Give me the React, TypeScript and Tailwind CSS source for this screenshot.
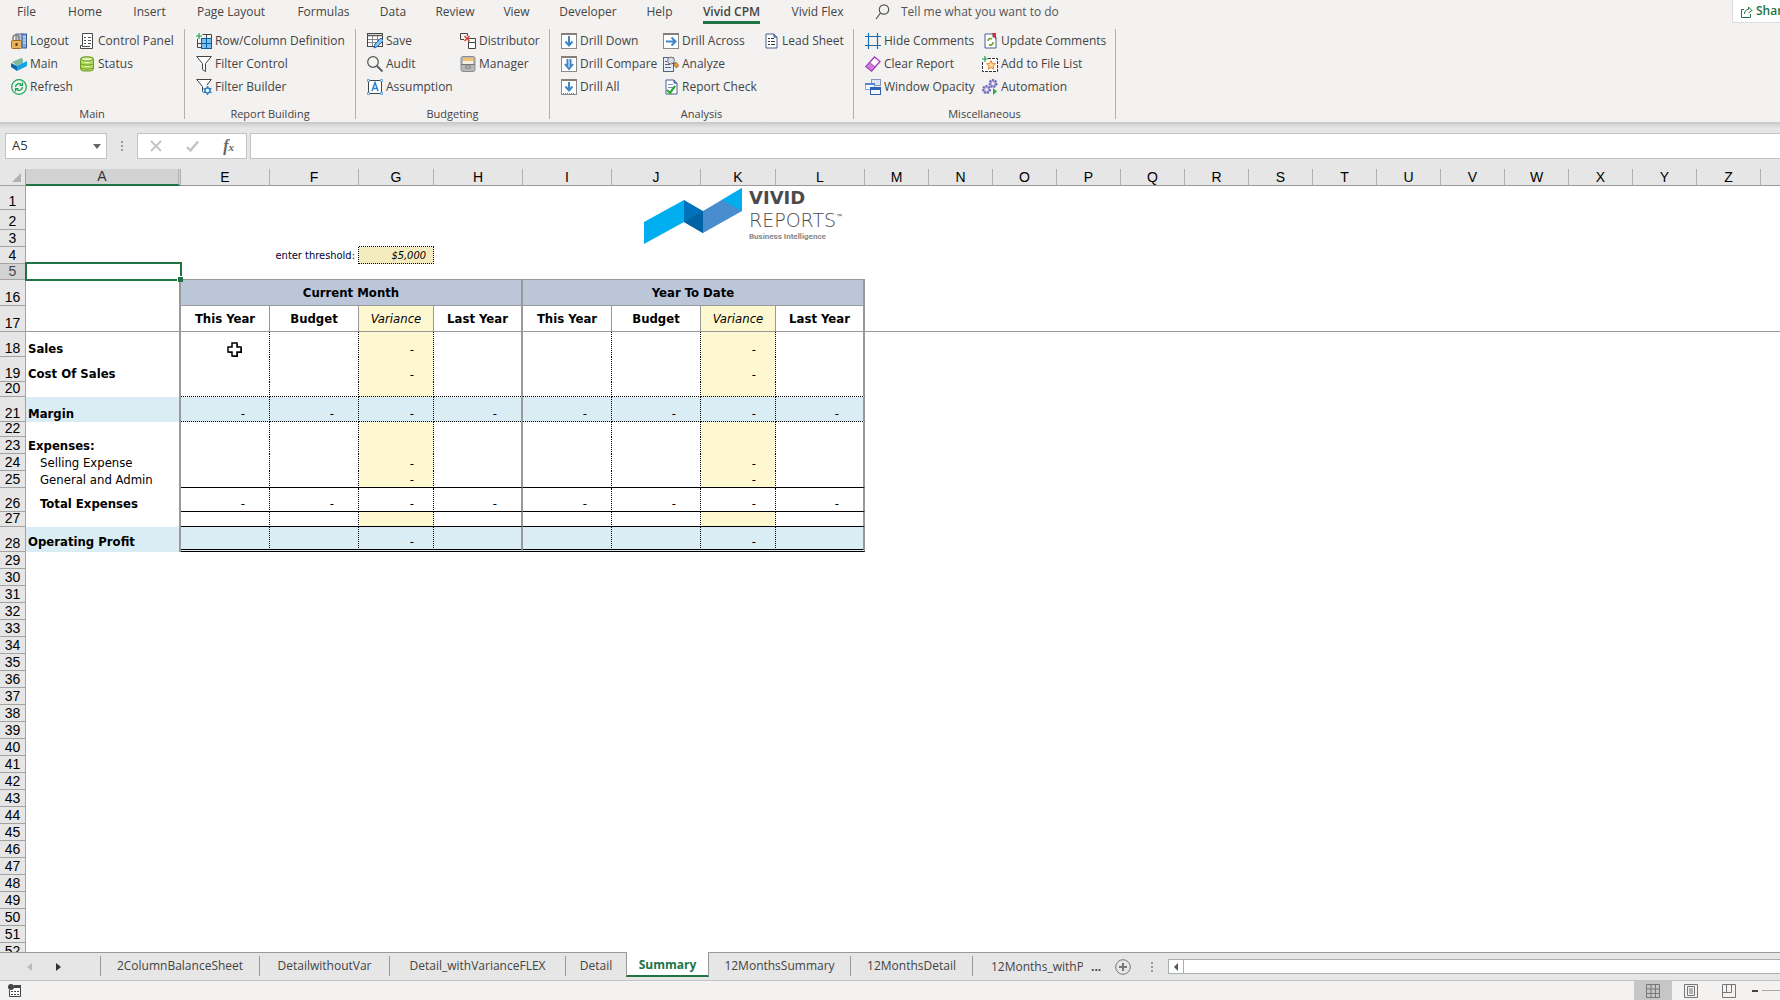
import React from "react";
import clsx from "clsx";

// 16x16 drawings used on the ribbon
const page = (
  <>
    <path d="M3 1h8l3 3v11H3z" fill="#fff" stroke="#4a5f8c" />
    <path d="M11 1v3h3" fill="#9db4dc" stroke="#2f477d" />
  </>
);

const drillFrame = (
  <>
    <rect x="0.5" y="0.5" width="15" height="15" fill="#fff" stroke="#8a8a8a" />
    <rect x="0" y="0" width="16" height="2" fill="#857f78" />
  </>
);

const icons: Record<string, React.ReactNode> = {
  logout: (
    <>
      <rect x="5" y="1" width="7" height="11" fill="#b9c4d6" stroke="#5e6f8f" />
      <rect x="11" y="1" width="4.500" height="14" fill="#86a4d6" stroke="#3d5c98" />
      <path d="M12 4h3M12 7h3M12 10h3" stroke="#e4ecf8" />
      <path d="M2 8V5a3 3 0 0 1 6 0v3" fill="none" stroke="#8c8272" strokeWidth="1.500" />
      <rect x="0.500" y="7.500" width="10" height="8" rx="1" fill="#e7b45c" stroke="#a4681f" />
      <path d="M5.500 10v3" stroke="#5f3b0c" strokeWidth="2" />
    </>
  ),
  main: (
    <>
      <path d="M1 6l9-4 2 1v4l-6 3z" fill="#7fb89a" />
      <path d="M0 7l6 3v5l-6-4z" fill="#0d68a8" />
      <path d="M6 10l10-5v5l-10 5z" fill="#14a3e8" />
    </>
  ),
  refresh: (
    <g fill="none" stroke="#16a34f">
      <circle cx="8" cy="8" r="7.300" strokeWidth="1.200" />
      <path d="M4.500 8a3.500 3.500 0 0 1 6-2.300M11.500 8a3.500 3.500 0 0 1-6 2.300" strokeWidth="1.400" />
      <path d="M11.500 3.500v3h-3M4.500 12.500v-3h3" strokeWidth="1.200" />
    </g>
  ),
  controlPanel: (
    <>
      <path d="M3.500 0.500h10v15h-12v-3h2z" fill="#fff" stroke="#4a4a4a" />
      <path d="M5 4.500h2M9 4.500h3M5 7.500h2M9 7.500h3M5 10.500h2M9 10.500h3M3 13.500h8" stroke="#555" />
    </>
  ),
  status: (
    <g stroke="#6d9c25">
      <rect x="1.500" y="1" width="13" height="14" rx="3" fill="#b5dc63" />
      <ellipse cx="8" cy="3" rx="6" ry="2" fill="#e2f3b8" />
      <path d="M2 8c3 1.500 9 1.500 12 0M2 12c3 1.500 9 1.500 12 0" fill="none" />
      <path d="M6 6.500h4M6 10.500h4" stroke="#f4ffd9" />
    </g>
  ),
  rowColumn: (
    <>
      <path d="M6.500 1.500h9v5M1.500 6v8.500h5M1.500 10.500h5M10.500 1v4" fill="none" stroke="#444" />
      <rect x="5.500" y="5.500" width="10" height="10" fill="#7cc0ee" stroke="#0b5fa5" />
      <path d="M10.500 5v11M5 10.500h11" stroke="#0b5fa5" />
      <path d="M3 0v6M0 3h6" stroke="#1da64b" strokeWidth="1.200" />
    </>
  ),
  filter: <path d="M0.700 0.500h14.600L9.500 7.500v8l-3-2v-6z" fill="#fff" stroke="#444" />,
  filterBuilder: (
    <>
      <path d="M7.500 13.500l-1-1v-5L0.700 0.500h14.600L11 6" fill="#fff" stroke="#444" />
      <circle cx="11.500" cy="11.500" r="2.500" fill="#fff" stroke="#2b83cf" strokeWidth="1.500" />
      <path d="M11.500 7v2M11.500 14v2M7.500 9.300l1.800 1M13.700 12.700l1.800 1M7.500 13.700l1.800-1M13.700 10.300l1.800-1" stroke="#2b83cf" strokeWidth="1.500" />
    </>
  ),
  save: (
    <>
      <rect x="0.500" y="0.500" width="15" height="13" fill="#fff" stroke="#444" />
      <path d="M0 2.500h16" stroke="#555" strokeWidth="1.500" />
      <path d="M1 6.500h14M1 9.500h14M5.500 3v10M10.500 3v10" stroke="#888" />
      <path d="M7 15l1-4 6-6 2.500 2.500-6 6z" fill="#8cc4f0" stroke="#1b62a8" />
    </>
  ),
  audit: (
    <g fill="none" stroke="#555">
      <circle cx="6" cy="6" r="5.300" strokeWidth="1.200" />
      <path d="M10 10l5.500 5.500" strokeWidth="1.800" />
    </g>
  ),
  assumption: (
    <>
      <rect x="1.500" y="1.500" width="13" height="13" fill="#fff" stroke="#444" />
      <path d="M5 12l3-8.500 3 8.500M6 9.500h4" fill="none" stroke="#2b83cf" strokeWidth="1.500" />
      <g fill="#fff" stroke="#2b83cf">
        <circle cx="1.500" cy="1.500" r="1.200" />
        <circle cx="14.500" cy="1.500" r="1.200" />
        <circle cx="1.500" cy="14.500" r="1.200" />
        <circle cx="14.500" cy="14.500" r="1.200" />
      </g>
    </>
  ),
  distributor: (
    <g fill="none" stroke="#444">
      <path d="M4 6.500H0.500v-6h7V3" />
      <path d="M8.500 9.500v-4h7v4zM8.500 15.500v-6h7v6z" fill="#fff" />
      <path d="M4.500 3l5 5M9.500 3l-5 5" stroke="#e2452f" strokeWidth="1.500" />
    </g>
  ),
  manager: (
    <>
      <rect x="1" y="0.500" width="14" height="15" rx="2" fill="#b7b7b9" stroke="#8d8d90" />
      <rect x="3" y="2" width="10" height="3" fill="#f2c169" />
      <rect x="3" y="5" width="10" height="3" fill="#f4f0e6" />
      <path d="M1 8.500h14" stroke="#77777a" />
      <rect x="6" y="10" width="4" height="2" fill="#eee" stroke="#777" />
    </>
  ),
  drillDown: (
    <>
      {drillFrame}
      <path d="M8 3v9M4.500 8.500L8 12.500l3.500-4" fill="none" stroke="#3f86c6" strokeWidth="2" />
    </>
  ),
  drillCompare: (
    <>
      {drillFrame}
      <path d="M6.500 3v8M9.500 3v8M4 8l4 5 4-5" fill="none" stroke="#3f86c6" strokeWidth="2" />
    </>
  ),
  drillAll: (
    <>
      {drillFrame}
      <path d="M8 3v8M4.500 7.500L8 11.500l3.500-4" fill="none" stroke="#3f86c6" strokeWidth="2" />
      <path d="M2 14.500h12" stroke="#3f86c6" strokeDasharray="1 1" />
    </>
  ),
  drillAcross: (
    <>
      {drillFrame}
      <path d="M3 8.500h9M8.500 4.500l4 4-4 4" fill="none" stroke="#3f86c6" strokeWidth="2" />
    </>
  ),
  analyze: (
    <>
      <rect x="0.500" y="1.500" width="10" height="14" fill="#e8eef7" stroke="#5a6377" />
      <path d="M2 5.500h2M2 8.500h5M2 11.500h6" stroke="#5a6377" />
      <circle cx="8" cy="4.500" r="3.500" fill="#d3dbe6" stroke="#777" />
      <path d="M10 7l4 4" stroke="#5d4b36" strokeWidth="2" />
      <path d="M13 6l3 3.500-2.500 2.500-3-3.500z" fill="#e39b3c" stroke="#5d4b36" strokeWidth="0.500" />
    </>
  ),
  reportCheck: (
    <>
      {page}
      <path d="M5 5.500h5M5 8.500h6" stroke="#7d93c0" />
      <path d="M4 11l3 3 5-7" fill="none" stroke="#33a63a" strokeWidth="2.200" />
    </>
  ),
  leadSheet: (
    <>
      {page}
      <path d="M5 5.500h2M8 5.500h3M5 8.500h2M8 8.500h4M5 11.500h2M8 11.500h4" stroke="#333" />
    </>
  ),
  hideComments: <path d="M3.500 0v16M12.500 0v16M0 3.500h16M0 12.500h16" stroke="#1d6cad" strokeWidth="1.200" />,
  clearReport: (
    <>
      <path d="M1 10.500L9.500 1l5.500 4.500L6.500 15z" fill="#fff" stroke="#a43bb8" strokeWidth="1.300" />
      <path d="M1 10.500l3.500-4 5.500 4.500-3.500 4z" fill="#cf7edb" stroke="#a43bb8" />
    </>
  ),
  windowOpacity: (
    <>
      <rect x="6.500" y="0.500" width="9" height="6" fill="#dde5f3" stroke="#8795b5" />
      <rect x="0.500" y="4.500" width="9" height="6" fill="#f7faff" stroke="#8fa9d6" />
      <rect x="0" y="4" width="10" height="2" fill="#5a86cf" />
      <rect x="5.500" y="9.500" width="10" height="6" fill="#f2f6fd" stroke="#2f5fa8" />
      <rect x="5" y="8" width="11" height="3" fill="#2f63b8" />
    </>
  ),
  updateComments: (
    <>
      {page}
      <path d="M10 0h4v7z" fill="#d93025" />
      <path d="M6 8a2.500 2.500 0 0 1 4-2M11 9a2.500 2.500 0 0 1-4 2.500" fill="none" stroke="#6f9c1f" strokeWidth="1.600" />
    </>
  ),
  addToList: (
    <>
      <path d="M6 2.500h9.500v13h-15V6" fill="#fff" stroke="#333" strokeDasharray="3 1" />
      <path d="M9 4.500l1.300 3 3.200.300-2.400 2.200.700 3.200L9 11.500l-2.800 1.700.700-3.200-2.400-2.200 3.200-.300z" fill="#fbd9a5" stroke="#e8862a" />
      <path d="M3 0v6M0 3h6" stroke="#1da64b" strokeWidth="1.200" />
    </>
  ),
  automation: (
    <>
      <circle cx="11" cy="4.500" r="3.500" fill="#a9a6dc" stroke="#6b68b5" strokeDasharray="2 1" strokeWidth="2" />
      <circle cx="4.500" cy="10.500" r="3.500" fill="#a9a6dc" stroke="#6b68b5" strokeDasharray="2 1" strokeWidth="2" />
      <circle cx="11" cy="4.500" r="1.200" fill="#fff" />
      <circle cx="4.500" cy="10.500" r="1.200" fill="#fff" />
      <path d="M11 9l4 3.500-4 3.500z" fill="#3aa544" />
    </>
  ),
};

const menuTabs = [
  { label: "File", width: "w-[49px]" },
  { label: "Home", width: "w-[68px]" },
  { label: "Insert", width: "w-[61px]" },
  { label: "Page Layout", width: "w-[102px]" },
  { label: "Formulas", width: "w-[83px]" },
  { label: "Data", width: "w-[56px]" },
  { label: "Review", width: "w-[68px]" },
  { label: "View", width: "w-[55px]" },
  { label: "Developer", width: "w-[88px]" },
  { label: "Help", width: "w-[55px]" },
  { label: "Vivid CPM", width: "w-[89px]", active: true },
  { label: "Vivid Flex", width: "w-[83px]" },
];

type Command = [icon: string, label: string];

const groups: { name: string; width: string; columns: { width: string; items: Command[] }[] }[] = [
  {
    name: "Main",
    width: "w-[185px]",
    columns: [
      { width: "w-[68px]", items: [["logout", "Logout"], ["main", "Main"], ["refresh", "Refresh"]] },
      { width: "w-[100px]", items: [["controlPanel", "Control Panel"], ["status", "Status"]] },
    ],
  },
  {
    name: "Report Building",
    width: "w-[171px]",
    columns: [
      {
        width: "w-[150px]",
        items: [["rowColumn", "Row/Column Definition"], ["filter", "Filter Control"], ["filterBuilder", "Filter Builder"]],
      },
    ],
  },
  {
    name: "Budgeting",
    width: "w-[194px]",
    columns: [
      { width: "w-[93px]", items: [["save", "Save"], ["audit", "Audit"], ["assumption", "Assumption"]] },
      { width: "w-[85px]", items: [["distributor", "Distributor"], ["manager", "Manager"]] },
    ],
  },
  {
    name: "Analysis",
    width: "w-[304px]",
    columns: [
      { width: "w-[102px]", items: [["drillDown", "Drill Down"], ["drillCompare", "Drill Compare"], ["drillAll", "Drill All"]] },
      { width: "w-[100px]", items: [["drillAcross", "Drill Across"], ["analyze", "Analyze"], ["reportCheck", "Report Check"]] },
      { width: "w-[85px]", items: [["leadSheet", "Lead Sheet"]] },
    ],
  },
  {
    name: "Miscellaneous",
    width: "w-[262px]",
    columns: [
      {
        width: "w-[117px]",
        items: [["hideComments", "Hide Comments"], ["clearReport", "Clear Report"], ["windowOpacity", "Window Opacity"]],
      },
      {
        width: "w-[130px]",
        items: [["updateComments", "Update Comments"], ["addToList", "Add to File List"], ["automation", "Automation"]],
      },
    ],
  },
];

const reportColumns = [
  { letter: "E", width: "w-[89px]" },
  { letter: "F", width: "w-[89px]" },
  { letter: "G", width: "w-[75px]" },
  { letter: "H", width: "w-[89px]" },
  { letter: "I", width: "w-[89px]" },
  { letter: "J", width: "w-[89px]" },
  { letter: "K", width: "w-[75px]" },
  { letter: "L", width: "w-[89px]" },
];
const emptyColumns = "MNOPQRSTUVWXYZ".split("");
const headings = ["This Year", "Budget", "Variance", "Last Year"];

interface ReportRow {
  n: number;
  height: string;
  label?: string;
  labelStyle?: string;
  shaded?: boolean;
  plain?: boolean; // no yellow variance column
  dashes?: "all" | "variance";
  bottom?: string;
}

const reportRows: ReportRow[] = [
  { n: 18, height: "h-[25px]", label: "Sales", labelStyle: "font-bold", dashes: "variance" },
  { n: 19, height: "h-[25px]", label: "Cost Of Sales", labelStyle: "font-bold", dashes: "variance" },
  { n: 20, height: "h-[15px]", bottom: "border-b border-b-black [border-bottom-style:dotted]" },
  { n: 21, height: "h-[25px]", label: "Margin", labelStyle: "font-bold", shaded: true, dashes: "all", bottom: "border-b border-b-black [border-bottom-style:dotted]" },
  { n: 22, height: "h-[15px]" },
  { n: 23, height: "h-[17px]", label: "Expenses:", labelStyle: "font-bold" },
  { n: 24, height: "h-[17px]", label: "Selling Expense", labelStyle: "pl-3", dashes: "variance" },
  { n: 25, height: "h-[17px]", label: "General and Admin", labelStyle: "pl-3", dashes: "variance", bottom: "border-b border-b-black" },
  { n: 26, height: "h-[24px]", label: "Total Expenses", labelStyle: "pl-3 font-bold", plain: true, dashes: "all", bottom: "border-b border-b-black" },
  { n: 27, height: "h-[15px]", bottom: "border-b border-b-black" },
  { n: 28, height: "h-[25px]", label: "Operating Profit", labelStyle: "font-bold pb-[2px]", shaded: true, dashes: "variance", bottom: "border-b-[3px] border-b-black [border-bottom-style:double]" },
];

const trailingRows = Array.from({ length: 24 }, (_, i) => 29 + i);

const sheetTabs = [
  { label: "2ColumnBalanceSheet", width: "w-[160px]" },
  { label: "DetailwithoutVar", width: "w-[130px]" },
  { label: "Detail_withVarianceFLEX", width: "w-[176px]" },
  { label: "Detail", width: "w-[60px]" },
  { label: "Summary", width: "w-[83px]", active: true },
  { label: "12MonthsSummary", width: "w-[142px]" },
  { label: "12MonthsDetail", width: "w-[122px]" },
];

const Icon = ({ name }: { name: string }) => (
  <svg width="16" height="16" viewBox="0 0 16 16" className="shrink-0" aria-hidden="true">
    {icons[name]}
  </svg>
);

const MenuBar = () => (
  <div className="flex h-[29px] items-start pl-[2px] text-[#444]">
    {menuTabs.map((tab) => (
      <button key={tab.label} className={clsx("flex h-[24px] shrink-0 justify-center", tab.width)}>
        <span
          className={clsx(
            "h-[24px] whitespace-nowrap leading-[23px]",
            tab.active && "border-b-[3px] border-[#217346] font-semibold"
          )}
        >
          {tab.label}
        </span>
      </button>
    ))}
    <label className="ml-4 flex h-[24px] flex-1 items-center gap-[11px]">
      <svg width="15" height="16" viewBox="0 0 15 16" fill="none" stroke="#555" strokeWidth="1.200">
        <circle cx="9" cy="5.500" r="4.700" />
        <path d="M5.500 9L1 15" />
      </svg>
      <input
        className="w-[240px] bg-transparent outline-none placeholder:text-[#555]"
        placeholder="Tell me what you want to do"
      />
    </label>
    <button className="flex h-[23px] w-12 items-center gap-[3px] overflow-hidden border-b border-l border-[#ddd] bg-white pl-[7px] font-semibold text-[#217346]">
      <svg width="13" height="13" viewBox="0 0 13 13" className="shrink-0" fill="none" stroke="#217346">
        <path d="M4 4.500H1.500v8h9V9M4.500 9c0-3 1.500-4.500 4-4.500V2L12 5.500 8.500 8" />
      </svg>
      Share
    </button>
  </div>
);

const Ribbon = () => (
  <div className="flex h-[93px] text-[12px] text-[#444]">
    {groups.map((group) => (
      <section key={group.name} className={clsx("shrink-0", group.width)}>
        <div className="flex h-[90px] flex-col justify-between border-r border-[#b1b1b1]">
          <div className="flex pl-[11px]">
            {group.columns.map((column, i) => (
              <div key={i} className={clsx("shrink-0", column.width)}>
                {column.items.map(([icon, label]) => (
                  <button key={label} className="flex h-[23px] items-center gap-[3px] whitespace-nowrap">
                    <Icon name={icon} />
                    {label}
                  </button>
                ))}
              </div>
            ))}
          </div>
          <div className="text-center text-[11px] leading-[11px]">{group.name}</div>
        </div>
      </section>
    ))}
  </div>
);

const FormulaBar = () => (
  <div className="bg-[#e6e6e6]">
    <div className="h-[6px] bg-linear-to-b from-[#c6c6c6] to-[#e6e6e6]" />
    <div className="flex pt-[5px] pb-[10px] pl-[5px]">
      <div className="flex h-[26px] w-[102px] items-center border border-[#c3c3c3] bg-white pr-[5px] pl-[6px]">
        <input aria-label="Name box" defaultValue="A5" className="w-full min-w-0 text-[13px] text-[#333] outline-none" />
        <svg width="8" height="5" viewBox="0 0 8 5" className="shrink-0" fill="#666">
          <path d="M0 0h8L4 5z" />
        </svg>
      </div>
      <svg width="30" height="26" viewBox="0 0 30 26" fill="#999">
        <path d="M14 8h2v2h-2zM14 12h2v2h-2zM14 16h2v2h-2z" />
      </svg>
      <div className="flex h-[26px] w-[110px] items-center justify-between border border-[#c3c3c3] bg-white px-3">
        <button aria-label="Cancel">
          <svg width="12" height="12" viewBox="0 0 12 12" stroke="#c3c3c3" strokeWidth="1.800">
            <path d="M1 1l10 10M11 1L1 11" />
          </svg>
        </button>
        <button aria-label="Enter">
          <svg width="13" height="12" viewBox="0 0 13 12" fill="none" stroke="#c3c3c3" strokeWidth="2.400">
            <path d="M1 7l3.500 3.500L12 1.500" />
          </svg>
        </button>
        <button
          aria-label="Insert function"
          className="font-['Liberation_Serif',serif] text-[16px] leading-none font-bold text-[#666] italic"
        >
          f<span className="text-[11px]">x</span>
        </button>
      </div>
      <input aria-label="Formula" className="ml-[3px] h-[26px] min-w-0 flex-1 border border-r-0 border-[#c3c3c3] bg-white px-2 outline-none" />
    </div>
  </div>
);

const RowHeader = ({ n, selected }: { n: number; selected?: boolean }) => (
  <th
    scope="row"
    className={clsx(
      "border-r border-b border-[#a3a3a3] p-0 pb-[2px] text-center align-bottom font-['Liberation_Sans',sans-serif] text-[14px] leading-[12px] font-normal",
      selected ? "bg-[#d2d2d2] text-[#444]" : "bg-[#e6e6e6] text-black"
    )}
  >
    {n}
  </th>
);

// columns H and L close a block with a thick rule
const rightRule = (i: number, dotted: boolean) =>
  i % 4 === 3
    ? "border-r-2 border-r-[#999]"
    : dotted
      ? "border-r border-r-black [border-right-style:dotted]"
      : "border-r border-r-[#999]";

const VividLogo = () => (
  <div className="absolute top-[18px] left-[644px] flex h-[60px] gap-[7px]">
    <svg width="98" height="57" viewBox="0 0 98 57" aria-hidden="true">
      <path d="M0 35L40 13v22L0 57z" fill="#00aeef" />
      <path d="M40 13l19 11v22L40 35z" fill="#0072bc" />
      <path d="M40 35l19-11v22z" fill="#0063a6" />
      <path d="M59 24L98 1v23L59 46z" fill="#4a8dce" />
      <path d="M78 13L98 1v23z" fill="#00aeef" />
    </svg>
    <div className="font-['DejaVu_Sans',sans-serif] text-[#4b4b4b]">
      <div className="text-[18px] leading-[22px] font-bold">VIVID</div>
      <div className="flex text-[19px] leading-[22px] font-extralight">
        REPORTS<span className="text-[6px] leading-[14px]">™</span>
      </div>
      <div className="font-['Roboto',sans-serif] text-[8px] leading-[12px] font-bold text-[#888]">Business Intelligence</div>
    </div>
  </div>
);

const Sheet = () => (
  <main className="relative min-h-0 flex-1 overflow-hidden bg-white">
    <table className="w-full table-fixed border-separate border-spacing-0 font-['DejaVu_Sans_Condensed','Noto_Sans',sans-serif] text-[13px] leading-[13px] text-black">
      <colgroup>
        <col className="w-[26px]" />
        <col className="w-[155px]" />
        {reportColumns.map((c) => (
          <col key={c.letter} className={c.width} />
        ))}
        {emptyColumns.map((c) => (
          <col key={c} className="w-[64px]" />
        ))}
        <col />
      </colgroup>
      <thead className="bg-[#e6e6e6] font-['Liberation_Sans',sans-serif] text-[14px] leading-[15px]">
        <tr className="h-[17px]">
          <th className="border-r border-b border-[#a3a3a3] p-0" aria-label="Select all">
            <svg width="9" height="9" viewBox="0 0 9 9" className="ml-auto mr-1" fill="#b1b1b1">
              <path d="M9 0v9H0z" />
            </svg>
          </th>
          <th scope="col" className="border-r-[3px] border-b-2 border-r-[#b1b1b1] border-b-[#217346] bg-[#d2d2d2] p-0 font-normal text-[#333] [border-right-style:double]">
            A
          </th>
          {[...reportColumns.map((c) => c.letter), ...emptyColumns].map((letter) => (
            <th key={letter} scope="col" className="border-r border-b border-r-[#b1b1b1] border-b-[#999] p-0 font-normal">
              {letter}
            </th>
          ))}
          <th className="border-b border-[#999] p-0" />
        </tr>
      </thead>
      <tbody>
        <tr className="h-[24px]">
          <RowHeader n={1} />
          <td colSpan={24} />
        </tr>
        <tr className="h-[20px]">
          <RowHeader n={2} />
          <td colSpan={24} />
        </tr>
        <tr className="h-[17px]">
          <RowHeader n={3} />
          <td colSpan={2} />
          <td />
          <td className="border-b border-dotted border-black" />
          <td colSpan={20} />
        </tr>
        <tr className="h-[17px] text-[11px]">
          <RowHeader n={4} />
          <td />
          <td colSpan={2} className="border-r border-dotted border-black p-0 pr-[3px] text-right text-[#000033]">
            enter threshold:
          </td>
          <td className="border-r border-b border-dotted border-black bg-[#f4ecbf] p-0 pr-[7px] text-right italic">$5,000</td>
          <td colSpan={20} />
        </tr>
        <tr className="h-[16px]">
          <RowHeader n={5} selected />
          <td />
          <td colSpan={8} className="border-b border-[#999]" />
          <td colSpan={15} />
        </tr>
        <tr className="h-[26px]">
          <RowHeader n={16} />
          <td className="border-r-2 border-[#999]" />
          <th colSpan={4} className="border-r-2 border-b border-[#999] bg-[#bcc6d9] p-0 font-bold">Current Month</th>
          <th colSpan={4} className="border-r-2 border-b border-[#999] bg-[#bcc6d9] p-0 font-bold">Year To Date</th>
          <td colSpan={15} />
        </tr>
        <tr className="h-[26px]">
          <RowHeader n={17} />
          <td className="border-r-2 border-b border-[#999]" />
          {reportColumns.map((c, i) => (
            <th
              key={c.letter}
              className={clsx(
                "border-b border-b-[#999] p-0",
                rightRule(i, false),
                i % 4 === 2 ? "bg-[#fef8d0] font-normal italic" : "font-bold"
              )}
            >
              {headings[i % 4]}
            </th>
          ))}
          <td colSpan={15} className="border-b border-[#999]" />
        </tr>
        {reportRows.map((row) => (
          <tr key={row.n} className={row.height}>
            <RowHeader n={row.n} />
            <td
              className={clsx(
                "border-r-2 border-[#999] p-0 pb-[2px] align-bottom whitespace-nowrap",
                row.shaded && "bg-[#dbedf4]"
              )}
            >
              <div className={clsx("ml-[2px]", row.labelStyle)}>{row.label}</div>
            </td>
            {reportColumns.map((c, i) => {
              const variance = i % 4 === 2;
              return (
                <td
                  key={c.letter}
                  className={clsx(
                    "p-0 pb-px text-right align-bottom",
                    variance ? "pr-[19px]" : "pr-[24px]",
                    rightRule(i, true),
                    row.bottom,
                    row.shaded ? "bg-[#dbedf4]" : variance && !row.plain && "bg-[#fef8d0]"
                  )}
                >
                  {(row.dashes === "all" || (row.dashes === "variance" && variance)) && "-"}
                </td>
              );
            })}
            <td colSpan={15} />
          </tr>
        ))}
        {trailingRows.map((n) => (
          <tr key={n} className="h-[17px]">
            <RowHeader n={n} />
            <td colSpan={24} />
          </tr>
        ))}
      </tbody>
    </table>

    <VividLogo />

    {/* selected cell with its fill handle */}
    <div className="absolute top-[93px] left-[25px] h-[19px] w-[157px] border-2 border-[#217346]">
      <div className="absolute -right-[3px] -bottom-[3px] size-[6px] border-t border-l border-white bg-[#217346]" />
    </div>

    {/* pointer */}
    <svg width="16" height="16" viewBox="0 0 16 16" className="absolute top-[173px] left-[227px]" aria-hidden="true">
      <path d="M6 2h5v4h4v5h-4v4H6v-4H2V6h4z" fill="#000" />
      <path d="M5 1h5v4h4v5h-4v4H5v-4H1V5h4z" fill="#fff" stroke="#000" strokeWidth="1.500" />
    </svg>
  </main>
);

const SheetTabs = () => (
  <nav className="flex h-[29px] shrink-0 border-b border-[#c3c3c3] bg-[#e6e6e6] text-[12px] text-[#444]">
    <div className="flex w-[100px] items-center gap-[24px] border-t border-[#999] pl-[27px]">
      <button aria-label="Previous sheets">
        <svg width="5" height="8" viewBox="0 0 5 8" fill="#bbb"><path d="M5 0v8L0 4z" /></svg>
      </button>
      <button aria-label="Next sheets">
        <svg width="5" height="8" viewBox="0 0 5 8" fill="#333"><path d="M0 0v8l5-4z" /></svg>
      </button>
    </div>
    {sheetTabs.map((tab, i) =>
      tab.active ? (
        <button
          key={tab.label}
          className={clsx(
            "h-[25px] border-x border-b-2 border-x-[#999] border-b-[#217346] bg-white pt-[3px] font-bold text-[#217346]",
            tab.width
          )}
        >
          {tab.label}
        </button>
      ) : (
        <div key={tab.label} className={clsx("border-t border-[#999] py-[3px]", tab.width)}>
          <button
            className={clsx(
              "h-[20px] w-full border-[#999]",
              i === 0 && "border-l",
              sheetTabs[i + 1]?.active ? "" : "border-r"
            )}
          >
            {tab.label}
          </button>
        </div>
      )
    )}
    <div className="flex min-w-0 flex-1 items-center border-t border-[#999] pl-[18px]">
      <button className="w-[92px] overflow-hidden text-left whitespace-nowrap">12Months_withP</button>
      <button className="ml-2 w-[24px] text-left font-bold" aria-label="More sheets">...</button>
      <button aria-label="New sheet">
        <svg width="16" height="16" viewBox="0 0 16 16" fill="none" stroke="#777">
          <circle cx="8" cy="8" r="7.300" />
          <path d="M8 4v8M4 8h8" strokeWidth="2" />
        </svg>
      </button>
      <svg width="37" height="12" viewBox="0 0 37 12" className="shrink-0" fill="#999">
        <path d="M20 1h2v2h-2zM20 5h2v2h-2zM20 9h2v2h-2z" />
      </svg>
      <div className="flex h-[15px] min-w-0 flex-1 border border-r-0 border-[#a5b0a8] bg-white">
        <button className="flex w-[15px] items-center justify-center border-r border-[#a5b0a8]" aria-label="Scroll left">
          <svg width="4" height="8" viewBox="0 0 4 8" fill="#555"><path d="M4 0v8L0 4z" /></svg>
        </button>
      </div>
    </div>
  </nav>
);

const StatusBar = () => (
  <footer className="flex h-[19px] shrink-0 items-center bg-[#f3f2f1] pl-2">
    <button aria-label="Record macro">
      <svg width="14" height="14" viewBox="0 0 14 14">
        <path d="M1.500 6v6.500h11v-11H7" fill="#fff" stroke="#444" />
        <path d="M6 1h7v3H6z" fill="#444" />
        <path d="M3 7.500h2M6 7.500h2M9 7.500h2M3 10.500h2M6 10.500h2M9 10.500h2" stroke="#444" />
        <circle cx="3" cy="3" r="3" fill="#444" />
      </svg>
    </button>
    <div className="ml-auto flex h-full items-center">
      <button aria-label="Normal view" className="flex h-full w-[38px] items-center justify-center bg-[#c6c6c6]">
        <svg width="14" height="14" viewBox="0 0 14 14" fill="none" stroke="#777">
          <path d="M0.500 0.500h13v13h-13zM5 0v14M9.500 0v14M0 5h14M0 9.500h14" />
        </svg>
      </button>
      <button aria-label="Page layout view" className="flex w-[38px] justify-center">
        <svg width="14" height="14" viewBox="0 0 14 14" fill="none" stroke="#777">
          <path d="M0.500 0.500h13v13h-13zM3.500 2.500h7v9h-7zM5 5h4M5 7h4M5 9h4" />
        </svg>
      </button>
      <button aria-label="Page break view" className="flex w-[38px] justify-center">
        <svg width="14" height="14" viewBox="0 0 14 14" fill="none" stroke="#777">
          <path d="M0.500 0.500h13v13h-13zM4.500 0v8M9.500 0v8.500H0" />
        </svg>
      </button>
      <button aria-label="Zoom out" className="ml-1 h-[2px] w-[6px] bg-[#444]" />
      <div className="ml-1 h-px w-[18px] bg-[#aaa]" />
    </div>
  </footer>
);

const App = () => {
  return (
    <div className="flex h-screen flex-col overflow-hidden bg-[#e6e6e6] font-['Open_Sans','Noto_Sans',sans-serif] text-[12px]">
      <header className="shrink-0 bg-[#f3f2f1]">
        <MenuBar />
        <Ribbon />
        <FormulaBar />
      </header>
      <Sheet />
      <SheetTabs />
      <StatusBar />
    </div>
  );
};

export default App;
